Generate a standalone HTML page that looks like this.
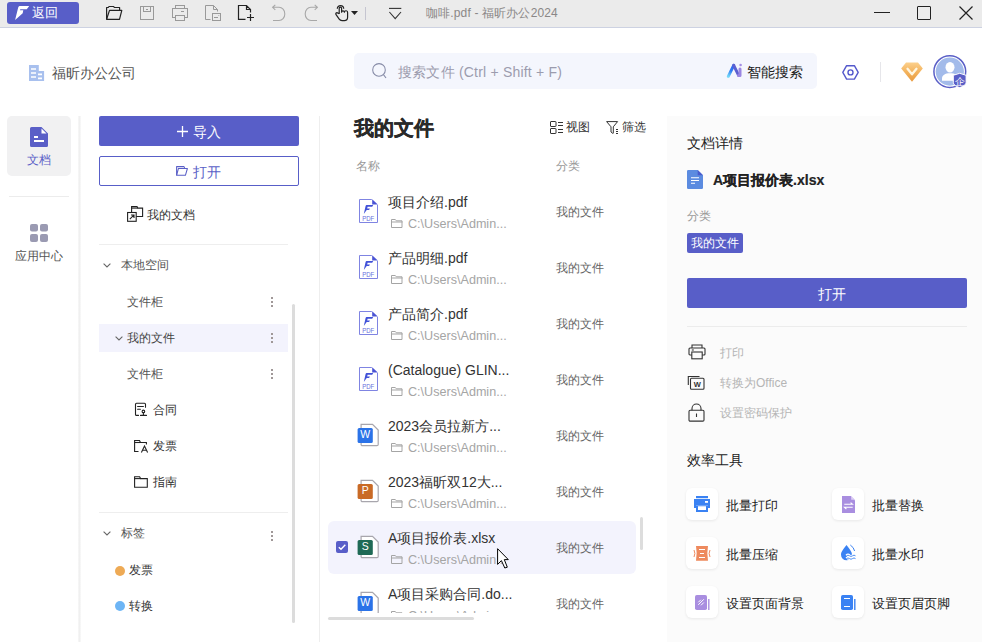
<!DOCTYPE html>
<html><head><meta charset="utf-8">
<style>
*{margin:0;padding:0;box-sizing:border-box}
html,body{width:982px;height:642px;overflow:hidden;background:#fff;font-family:"Liberation Sans",sans-serif;color:#333}
.a{position:absolute}
.t{position:absolute;white-space:nowrap;line-height:1}
svg{position:absolute;overflow:visible}
.dots{width:2px;height:11px;background:radial-gradient(circle,#a09898 0.9px,transparent 1.1px) 0 0/2px 4px repeat-y}
#titlebar{left:0;top:0;width:982px;height:28px;background:#ebebeb;border-bottom:1px solid #cdd2e2}
</style></head><body>
<!-- title bar -->
<div id="titlebar" class="a"></div>
<div class="a" style="left:7px;top:2px;width:72px;height:22px;background:#585ec8;border-radius:3px"></div>
<svg style="left:12px;top:3px" width="20" height="20" viewBox="0 0 20 20"><path d="M7.5 3.1L17.2 3L14.8 6.3L8.3 6.3L8 7.3L11.3 7.3L10.7 10.3L3.1 16.9L6.2 4.6Q6.6 3.1 7.5 3.1Z" fill="#fff"/></svg>
<div class="t" style="left:32px;top:6px;font-size:13px;color:#fff">返回</div>

<!-- toolbar icons -->
<svg style="left:102px;top:2px" width="24" height="22" viewBox="0 0 24 22" fill="none" stroke="#222" stroke-width="1.2" stroke-linejoin="round"><path d="M4.6 17.3V5.5H6.3L7 4.5H11.7L12.3 5.5H17.6V8.3"/><path d="M7.5 8.4H19.8L17.5 17.3H4.6Z"/></svg>
<svg style="left:140px;top:6px" width="14" height="14" viewBox="0 0 14 14" fill="none" stroke="#999" stroke-width="1"><rect x="0.5" y="0.5" width="13" height="13"/><rect x="3.5" y="0.5" width="7" height="5"/><path d="M6 3.5H8"/></svg>
<svg style="left:168px;top:2px" width="58" height="22" viewBox="0 0 58 22" fill="none" stroke="#999" stroke-width="1"><rect x="7.5" y="3.5" width="9" height="3"/><rect x="4.5" y="6.5" width="15" height="9"/><rect x="7.5" y="13.5" width="9" height="5" fill="#ebebeb"/><path d="M13 9.5H16"/><path d="M42.5 17.5H37.5V3.5H45.5L49.5 7.5V9.5M45.5 3.5V7.5H49.5"/><rect x="44.5" y="11.5" width="8" height="7"/><path d="M46 15.5H50M50.5 13.5H51.2"/></svg>

<svg style="left:234px;top:2px" width="56" height="22" viewBox="0 0 56 22" fill="none" stroke="#222" stroke-width="1.2"><path d="M11.5 17.3H4.5V3.5H12.5L16.5 7.5V10.5M12.5 3.5V7.5H16.5M16.5 12V19M13 15.5H20"/><path d="M39 18.5H45A5.8 6.6 0 0 0 45 5.3H38.6M41.3 2.8L38.6 5.3L41.3 7.8" stroke="#a8a8a8" stroke-width="1.1"/></svg>

<svg style="left:299px;top:2px" width="24" height="22" viewBox="0 0 24 22" fill="none" stroke="#a8a8a8" stroke-width="1.1"><g transform="translate(24 0) scale(-1 1)"><path d="M6 18.5H12A5.8 6.6 0 0 0 12 5.3H5.6M8.3 2.8L5.6 5.3L8.3 7.8"/></g></svg>
<svg style="left:330px;top:2px" width="32" height="22" viewBox="0 0 32 22" fill="none" stroke="#222" stroke-width="1.2" stroke-linejoin="round"><path d="M7.3 6.8A3.2 3.2 0 0 1 13.7 6.8"/><path d="M9.2 12V6.4A1.2 1.2 0 0 1 11.6 6.4V10.2A1.4 1.4 0 0 1 14.4 10.2A1.6 1.6 0 0 1 17.6 10.5V15.3Q17.6 18.6 14.3 18.6H12Q10.2 18.6 9.2 17.2L5.9 12.4Q5.4 10.6 7.2 10.7L9.2 11.8"/><path d="M21 9.1H28L24.5 13Z" fill="#222" stroke="none"/></svg>

<div class="a" style="left:365px;top:7px;width:1px;height:13px;background:#c5c5d0"></div>
<svg style="left:388px;top:7px" width="15" height="13" viewBox="0 0 15 13" fill="none" stroke="#333" stroke-width="1.1"><path d="M1 1.4h12.3"/><path d="M1.4 5l5.8 6.6 5.8-6.6"/></svg>
<div class="t" style="left:426px;top:7px;font-size:12px;color:#8a8787;letter-spacing:0.15px">咖啡.pdf - 福昕办公2024</div>
<!-- window controls -->
<div class="a" style="left:874px;top:12px;width:16px;height:1px;background:#222"></div>
<div class="a" style="left:917px;top:6px;width:14px;height:14px;border:1.3px solid #222;border-radius:1px"></div>
<svg style="left:959px;top:6px" width="14" height="14" viewBox="0 0 14 14" stroke="#222" stroke-width="1.2"><path d="M0.5 0.5L13.5 13.5M13.5 0.5L0.5 13.5"/></svg>


<!-- header -->
<svg style="left:29px;top:65px" width="16" height="16" viewBox="0 0 16 16"><path d="M0 0h9.8v16H0z M9.8 6h5.3v10H9.8z" fill="#a8c0ee"/><path d="M2 4h5M2 8h5M2 12h5M9 9.3h4M9 13.3h4" stroke="#fff" stroke-width="1.7"/></svg>
<div class="t" style="left:52px;top:66px;font-size:14px;color:#555">福昕办公公司</div>
<div class="a" style="left:354px;top:53px;width:463px;height:36px;background:#f4f6fd;border-radius:5px"></div>
<svg style="left:372px;top:63px" width="15" height="16" viewBox="0 0 15 16" fill="none" stroke="#858aa6" stroke-width="1.05"><circle cx="7" cy="6.9" r="6.3"/><path d="M11.5 11.6L14 15"/></svg>
<div class="t" style="left:398px;top:65px;font-size:14px;color:#9c9cae;letter-spacing:0.2px">搜索文件 (Ctrl + Shift + F)</div>
<svg style="left:722px;top:58px" width="26" height="26" viewBox="0 0 26 26"><defs><linearGradient id="ai" x1="0" y1="1" x2="0.3" y2="0"><stop offset="0" stop-color="#72d6f8"/><stop offset="0.6" stop-color="#2f7cf2"/><stop offset="1" stop-color="#2f6cf0"/></linearGradient></defs><path d="M6.3 18.3L11.7 7.3" stroke="url(#ai)" stroke-width="3" stroke-linecap="round"/><path d="M11.7 7.3L16.5 17.2" stroke="#5c5fd0" stroke-width="3" stroke-linecap="round"/><path d="M16.5 17.5h1.5V11" stroke="#9a86e2" stroke-width="3" stroke-linecap="round" stroke-linejoin="round" fill="none"/><circle cx="18.6" cy="7" r="1.3" fill="#a58ee4"/></svg>
<div class="t" style="left:747px;top:65px;font-size:14px;color:#222">智能搜索</div>
<svg style="left:842px;top:65px" width="17" height="15" viewBox="0 0 17 15" fill="none" stroke="#5458cc" stroke-width="1.4" stroke-linejoin="round"><path d="M4.6 0.7H12.4L16.2 7.4L12.4 14.1H4.6L0.8 7.4Z"/><circle cx="8.5" cy="7.4" r="2.5"/></svg>
<div class="a" style="left:880px;top:62px;width:1px;height:20px;background:#e6e6ea"></div>
<svg style="left:901px;top:62px" width="22" height="20" viewBox="0 0 22 20"><defs><linearGradient id="dg" x1="0" y1="0" x2="0" y2="1"><stop offset="0" stop-color="#fcd08c"/><stop offset="0.45" stop-color="#f4b560"/><stop offset="1" stop-color="#e99a3e"/></linearGradient></defs><path d="M5 0.5h12l4.8 6L11 19.8 0.2 6.5Z" fill="url(#dg)"/><path d="M6.5 6.8L11 12.3 15.5 6.8" fill="none" stroke="#fff6e0" stroke-width="2.3" stroke-linecap="round" stroke-linejoin="round"/></svg>
<svg style="left:928px;top:50px" width="44" height="44" viewBox="0 0 44 44"><circle cx="21.8" cy="21.6" r="15.9" fill="#fff" stroke="#5a5fc7" stroke-width="1.5"/><circle cx="21.8" cy="21.6" r="14.1" fill="#a3bbea"/><ellipse cx="22" cy="17.3" rx="4.5" ry="5.3" fill="#fff"/><path d="M14 30.8V28.5C14 25.3 17 23.3 22 23.3C27 23.3 30 25.3 30 28.5V30.8Z" fill="#fff"/><path d="M25.3 25.3L31.7 23.3L38.1 25.3V32.3C38.1 34.8 35.2 36.5 31.7 37.6C28.2 36.5 25.3 34.8 25.3 32.3Z" fill="#5a5fc7" stroke="#fff" stroke-width="1"/><text x="31.7" y="35.2" font-size="9.5" fill="#fff" text-anchor="middle" font-family="Liberation Sans">企</text></svg>


<!-- left nav -->
<div class="a" style="left:7px;top:116px;width:64px;height:60px;background:#f1f1f2;border-radius:5px"></div>
<svg style="left:30px;top:127px" width="18" height="20" viewBox="0 0 18 20"><path d="M1.5 0H11.5L18 6.5V18.5A1.5 1.5 0 0 1 16.5 20H1.5A1.5 1.5 0 0 1 0 18.5V1.5A1.5 1.5 0 0 1 1.5 0Z" fill="#5a5fc7"/><path d="M11.5 1.5V6.5H16.5Z" fill="#fff"/><rect x="4" y="9" width="4" height="2" fill="#fff"/><rect x="4" y="13" width="10" height="2" fill="#fff"/></svg>
<div class="t" style="left:27px;top:154px;font-size:12px;color:#5a5fc7">文档</div>
<div class="a" style="left:9px;top:196px;width:60px;height:1px;background:#ececec"></div>
<svg style="left:30px;top:224px" width="18" height="18" viewBox="0 0 18 18" fill="#9a9ab2"><rect x="0" y="0" width="8" height="7.5" rx="2"/><rect x="10" y="0" width="8" height="7.5" rx="2"/><rect x="0" y="10" width="8" height="8" rx="2"/><rect x="10" y="10" width="8" height="8" rx="2"/></svg>
<div class="t" style="left:15px;top:250px;font-size:12px;color:#555">应用中心</div>
<div class="a" style="left:78px;top:116px;width:3px;height:526px;background:linear-gradient(to right,#f8f8f8,#f0f0f0 50%,#fafafa)"></div>

<!-- tree panel -->
<div class="a" style="left:99px;top:116px;width:200px;height:29.5px;background:#585ec8;border-radius:2px"></div>
<svg style="left:177px;top:126px" width="11" height="11" viewBox="0 0 11 11" stroke="#fff" stroke-width="1.3"><path d="M5.5 0v11M0 5.5h11"/></svg>
<div class="t" style="left:193px;top:125px;font-size:14px;color:#fff">导入</div>
<div class="a" style="left:99px;top:156px;width:200px;height:30px;border:1px solid #585ec8;border-radius:2px;background:#fff"></div>
<svg style="left:176px;top:166px" width="12" height="10" viewBox="0 0 12 10" fill="none" stroke="#5a5fc7" stroke-width="1.05" stroke-linejoin="round"><path d="M0.6 9.3V0.6H8L8.8 2.4"/><path d="M2.4 2.5H11.4L9.4 9.3H0.6Z"/></svg>
<div class="t" style="left:193px;top:165px;font-size:14px;color:#5a5fc7">打开</div>
<svg style="left:127px;top:206px" width="17" height="16" viewBox="0 0 17 16" fill="none" stroke="#222" stroke-width="1.1"><path d="M4.6 6.3V0.6H10L10.8 2.1H15.6V10.5H9.2"/><path d="M4.6 2.1H10.8"/><rect x="0.6" y="6.5" width="8.6" height="8.8"/><path d="M2.8 13.2L6.8 9.2M4 9H7V12"/></svg>
<div class="t" style="left:147px;top:209px;font-size:12px;color:#333">我的文档</div>
<div class="a" style="left:99px;top:244px;width:189px;height:1px;background:#eeeeee"></div>

<svg style="left:103px;top:263px" width="8" height="5" viewBox="0 0 8 5" fill="none" stroke="#666" stroke-width="1.1"><path d="M0.6 0.6L4 4L7.4 0.6"/></svg>
<div class="t" style="left:121px;top:259px;font-size:12px;color:#555">本地空间</div>
<div class="t" style="left:127px;top:296px;font-size:12px;color:#555">文件柜</div>
<div class="a dots" style="left:271px;top:296px"></div>
<div class="a" style="left:99px;top:324px;width:189px;height:28px;background:#f3f3fd"></div>
<svg style="left:115px;top:336px" width="8" height="5" viewBox="0 0 8 5" fill="none" stroke="#666" stroke-width="1.1"><path d="M0.6 0.6L4 4L7.4 0.6"/></svg>
<div class="t" style="left:127px;top:332px;font-size:12px;color:#444">我的文件</div>
<div class="a dots" style="left:271px;top:332px"></div>
<div class="t" style="left:127px;top:368px;font-size:12px;color:#555">文件柜</div>
<div class="a dots" style="left:271px;top:368px"></div>
<svg style="left:131px;top:400px" width="20" height="20" viewBox="0 0 20 20" fill="none" stroke="#222" stroke-width="1.1" stroke-linecap="round"><path d="M7.5 15.4H5.5Q4.5 15.4 4.5 14.4V4.3Q4.5 3.3 5.5 3.3H13.5Q14.5 3.3 14.5 4.3V7.3"/><path d="M9.5 15.4H15.5M12.4 12.6V15.4M6.6 6.5H12.4M6.6 9.3H9.4"/><circle cx="12.4" cy="11.4" r="1.3"/></svg>
<div class="t" style="left:153px;top:404px;font-size:12px;color:#333">合同</div>
<svg style="left:131px;top:436px" width="20" height="20" viewBox="0 0 20 20" fill="none" stroke="#222" stroke-width="1.1"><path d="M7.5 15.5H3.6V4.5H8.5L9.5 6.5H15.4V8.5"/><path d="M3.6 6.5H9.5"/><path d="M10.4 16.6L13.5 10L16.6 16.6M11.5 14.3H15.5"/></svg>
<div class="t" style="left:153px;top:440px;font-size:12px;color:#333">发票</div>
<svg style="left:131px;top:472px" width="20" height="20" viewBox="0 0 20 20" fill="none" stroke="#222" stroke-width="1.1"><path d="M3.6 15.2V4.7H8.6L9.6 6.6H16.3V15.2Z"/><path d="M3.6 6.6H9.6"/></svg>
<div class="t" style="left:153px;top:476px;font-size:12px;color:#333">指南</div>
<div class="a" style="left:99px;top:512px;width:189px;height:1px;background:#eeeeee"></div>
<svg style="left:103px;top:531px" width="8" height="5" viewBox="0 0 8 5" fill="none" stroke="#666" stroke-width="1.1"><path d="M0.6 0.6L4 4L7.4 0.6"/></svg>
<div class="t" style="left:121px;top:527px;font-size:12px;color:#555">标签</div>
<div class="a dots" style="left:271px;top:530px"></div>
<div class="a" style="left:115px;top:566px;width:10px;height:10px;border-radius:50%;background:#eeaa55"></div>
<div class="t" style="left:129px;top:564px;font-size:12px;color:#333">发票</div>
<div class="a" style="left:115px;top:601px;width:10px;height:10px;border-radius:50%;background:#6db5f5"></div>
<div class="t" style="left:129px;top:600px;font-size:12px;color:#333">转换</div>
<div class="a" style="left:292px;top:304px;width:3px;height:319px;background:#dcdcdc;border-radius:1.5px"></div>
<div class="a" style="left:319px;top:116px;width:1px;height:526px;background:#eeeeee"></div>

<!-- file list -->
<div class="t" style="left:354px;top:118px;font-size:20px;font-weight:bold;color:#2a2a2a;-webkit-text-stroke:0.35px #2a2a2a">我的文件</div>
<svg style="left:550px;top:121px" width="14" height="13" viewBox="0 0 14 13" fill="none" stroke="#333" stroke-width="1"><rect x="0.5" y="0.5" width="5.5" height="5" rx="0.5"/><rect x="0.5" y="7.5" width="5.5" height="5" rx="0.5"/><path d="M8 1.5H13M8 4.5H13M8 8.5H13M8 11.5H13"/></svg>
<div class="t" style="left:566px;top:121px;font-size:12px;color:#333">视图</div>
<svg style="left:606px;top:121px" width="14" height="13" viewBox="0 0 14 13" fill="none" stroke="#333" stroke-width="1"><path d="M0.6 0.6H11.6L7.3 5.8V12Q7.3 12.6 6.7 12.3L5 11V5.8Z" stroke-linejoin="round"/><path d="M10 8.5H12M10 10.5H12M10 12.5H12"/></svg>
<div class="t" style="left:622px;top:121px;font-size:12px;color:#333">筛选</div>
<div class="t" style="left:356px;top:160px;font-size:12px;color:#999">名称</div>
<div class="t" style="left:556px;top:160px;font-size:12px;color:#999">分类</div>
<div class="a" style="left:328px;top:521px;width:308px;height:53px;background:#f3f3fd;border-radius:6px"></div>
<div class="a" style="left:336px;top:541px;width:12px;height:12px;background:#585ec8;border-radius:2px"></div>
<svg style="left:336px;top:541px" width="12" height="12" viewBox="0 0 12 12" fill="none" stroke="#fff" stroke-width="1.4"><path d="M2.8 6.2L5 8.3L9.3 3.8"/></svg>
<div class="a" style="left:320px;top:186px;width:347px;height:427px;overflow:hidden">
<svg style="left:39px;top:13px" width="19" height="24" viewBox="0 0 19 24"><path d="M12.8 0.5H0.5V23.5H18.5V5.8" fill="none" stroke="#7f84e2" stroke-width="1"/><path d="M13.2 0.2L18.8 5.4H13.2Z" fill="#4b54d4"/><path d="M7.6 6H14.2L13.2 7.8H8.6L8.2 9.5H10.9L10.1 11H7.7L4.8 14.9L6.6 7Q6.9 6 7.6 6Z" fill="#4151d8"/><text x="9.2" y="22" font-size="8" font-family="Liberation Sans" fill="#6870dc" text-anchor="middle" textLength="12" lengthAdjust="spacingAndGlyphs">PDF</text></svg>
<div class="t" style="left:68px;top:9px;font-size:14px;color:#333">项目介绍.pdf</div>
<svg style="left:71px;top:33px" width="12" height="10" viewBox="0 0 12 10" fill="none" stroke="#a5a5a5" stroke-width="1"><path d="M0.5 8.5V0.5h3.8l1 1.3h5.7V8.5Z"/><path d="M0.5 3h11"/></svg>
<div class="t" style="left:88px;top:32px;font-size:12.6px;color:#a5a5a5">C:\Users\Admin...</div>
<div class="t" style="left:236px;top:20px;font-size:12px;color:#666">我的文件</div>
<svg style="left:39px;top:69px" width="19" height="24" viewBox="0 0 19 24"><path d="M12.8 0.5H0.5V23.5H18.5V5.8" fill="none" stroke="#7f84e2" stroke-width="1"/><path d="M13.2 0.2L18.8 5.4H13.2Z" fill="#4b54d4"/><path d="M7.6 6H14.2L13.2 7.8H8.6L8.2 9.5H10.9L10.1 11H7.7L4.8 14.9L6.6 7Q6.9 6 7.6 6Z" fill="#4151d8"/><text x="9.2" y="22" font-size="8" font-family="Liberation Sans" fill="#6870dc" text-anchor="middle" textLength="12" lengthAdjust="spacingAndGlyphs">PDF</text></svg>
<div class="t" style="left:68px;top:65px;font-size:14px;color:#333">产品明细.pdf</div>
<svg style="left:71px;top:89px" width="12" height="10" viewBox="0 0 12 10" fill="none" stroke="#a5a5a5" stroke-width="1"><path d="M0.5 8.5V0.5h3.8l1 1.3h5.7V8.5Z"/><path d="M0.5 3h11"/></svg>
<div class="t" style="left:88px;top:88px;font-size:12.6px;color:#a5a5a5">C:\Users\Admin...</div>
<div class="t" style="left:236px;top:76px;font-size:12px;color:#666">我的文件</div>
<svg style="left:39px;top:125px" width="19" height="24" viewBox="0 0 19 24"><path d="M12.8 0.5H0.5V23.5H18.5V5.8" fill="none" stroke="#7f84e2" stroke-width="1"/><path d="M13.2 0.2L18.8 5.4H13.2Z" fill="#4b54d4"/><path d="M7.6 6H14.2L13.2 7.8H8.6L8.2 9.5H10.9L10.1 11H7.7L4.8 14.9L6.6 7Q6.9 6 7.6 6Z" fill="#4151d8"/><text x="9.2" y="22" font-size="8" font-family="Liberation Sans" fill="#6870dc" text-anchor="middle" textLength="12" lengthAdjust="spacingAndGlyphs">PDF</text></svg>
<div class="t" style="left:68px;top:121px;font-size:14px;color:#333">产品简介.pdf</div>
<svg style="left:71px;top:145px" width="12" height="10" viewBox="0 0 12 10" fill="none" stroke="#a5a5a5" stroke-width="1"><path d="M0.5 8.5V0.5h3.8l1 1.3h5.7V8.5Z"/><path d="M0.5 3h11"/></svg>
<div class="t" style="left:88px;top:144px;font-size:12.6px;color:#a5a5a5">C:\Users\Admin...</div>
<div class="t" style="left:236px;top:132px;font-size:12px;color:#666">我的文件</div>
<svg style="left:39px;top:181px" width="19" height="24" viewBox="0 0 19 24"><path d="M12.8 0.5H0.5V23.5H18.5V5.8" fill="none" stroke="#7f84e2" stroke-width="1"/><path d="M13.2 0.2L18.8 5.4H13.2Z" fill="#4b54d4"/><path d="M7.6 6H14.2L13.2 7.8H8.6L8.2 9.5H10.9L10.1 11H7.7L4.8 14.9L6.6 7Q6.9 6 7.6 6Z" fill="#4151d8"/><text x="9.2" y="22" font-size="8" font-family="Liberation Sans" fill="#6870dc" text-anchor="middle" textLength="12" lengthAdjust="spacingAndGlyphs">PDF</text></svg>
<div class="t" style="left:68px;top:177px;font-size:14px;color:#333">(Catalogue) GLIN...</div>
<svg style="left:71px;top:201px" width="12" height="10" viewBox="0 0 12 10" fill="none" stroke="#a5a5a5" stroke-width="1"><path d="M0.5 8.5V0.5h3.8l1 1.3h5.7V8.5Z"/><path d="M0.5 3h11"/></svg>
<div class="t" style="left:88px;top:200px;font-size:12.6px;color:#a5a5a5">C:\Users\Admin...</div>
<div class="t" style="left:236px;top:188px;font-size:12px;color:#666">我的文件</div>
<svg style="left:37px;top:237px" width="23" height="24" viewBox="0 0 23 24"><path d="M4.1 1.3H15.5L21.2 7V21.5a1.2 1.2 0 0 1-1.2 1.2H5.3a1.2 1.2 0 0 1-1.2-1.2Z" fill="#fff" stroke="#a8a6ad" stroke-width="1.2"/><rect x="0.6" y="5" width="15.2" height="15" rx="1.5" fill="#2b73e8"/><text x="8.2" y="15" font-size="10.5" font-family="Liberation Sans" fill="#fff" text-anchor="middle">W</text></svg>
<div class="t" style="left:68px;top:233px;font-size:14px;color:#333">2023会员拉新方...</div>
<svg style="left:71px;top:257px" width="12" height="10" viewBox="0 0 12 10" fill="none" stroke="#a5a5a5" stroke-width="1"><path d="M0.5 8.5V0.5h3.8l1 1.3h5.7V8.5Z"/><path d="M0.5 3h11"/></svg>
<div class="t" style="left:88px;top:256px;font-size:12.6px;color:#a5a5a5">C:\Users\Admin...</div>
<div class="t" style="left:236px;top:244px;font-size:12px;color:#666">我的文件</div>
<svg style="left:37px;top:293px" width="23" height="24" viewBox="0 0 23 24"><path d="M4.1 1.3H15.5L21.2 7V21.5a1.2 1.2 0 0 1-1.2 1.2H5.3a1.2 1.2 0 0 1-1.2-1.2Z" fill="#fff" stroke="#a8a6ad" stroke-width="1.2"/><rect x="0.6" y="5" width="15.2" height="15" rx="1.5" fill="#c96a26"/><text x="8.2" y="15" font-size="10.5" font-family="Liberation Sans" fill="#fff" text-anchor="middle">P</text></svg>
<div class="t" style="left:68px;top:289px;font-size:14px;color:#333">2023福昕双12大...</div>
<svg style="left:71px;top:313px" width="12" height="10" viewBox="0 0 12 10" fill="none" stroke="#a5a5a5" stroke-width="1"><path d="M0.5 8.5V0.5h3.8l1 1.3h5.7V8.5Z"/><path d="M0.5 3h11"/></svg>
<div class="t" style="left:88px;top:312px;font-size:12.6px;color:#a5a5a5">C:\Users\Admin...</div>
<div class="t" style="left:236px;top:300px;font-size:12px;color:#666">我的文件</div>
<svg style="left:37px;top:349px" width="23" height="24" viewBox="0 0 23 24"><path d="M4.1 1.3H15.5L21.2 7V21.5a1.2 1.2 0 0 1-1.2 1.2H5.3a1.2 1.2 0 0 1-1.2-1.2Z" fill="#fff" stroke="#a8a6ad" stroke-width="1.2"/><rect x="0.6" y="5" width="15.2" height="15" rx="1.5" fill="#1f6a56"/><text x="8.2" y="15" font-size="10.5" font-family="Liberation Sans" fill="#fff" text-anchor="middle">S</text></svg>
<div class="t" style="left:68px;top:345px;font-size:14px;color:#333">A项目报价表.xlsx</div>
<svg style="left:71px;top:369px" width="12" height="10" viewBox="0 0 12 10" fill="none" stroke="#a5a5a5" stroke-width="1"><path d="M0.5 8.5V0.5h3.8l1 1.3h5.7V8.5Z"/><path d="M0.5 3h11"/></svg>
<div class="t" style="left:88px;top:368px;font-size:12.6px;color:#a5a5a5">C:\Users\Admin...</div>
<div class="t" style="left:236px;top:356px;font-size:12px;color:#666">我的文件</div>
<svg style="left:37px;top:405px" width="23" height="24" viewBox="0 0 23 24"><path d="M4.1 1.3H15.5L21.2 7V21.5a1.2 1.2 0 0 1-1.2 1.2H5.3a1.2 1.2 0 0 1-1.2-1.2Z" fill="#fff" stroke="#a8a6ad" stroke-width="1.2"/><rect x="0.6" y="5" width="15.2" height="15" rx="1.5" fill="#2b73e8"/><text x="8.2" y="15" font-size="10.5" font-family="Liberation Sans" fill="#fff" text-anchor="middle">W</text></svg>
<div class="t" style="left:68px;top:401px;font-size:14px;color:#333">A项目采购合同.do...</div>
<svg style="left:71px;top:425px" width="12" height="10" viewBox="0 0 12 10" fill="none" stroke="#a5a5a5" stroke-width="1"><path d="M0.5 8.5V0.5h3.8l1 1.3h5.7V8.5Z"/><path d="M0.5 3h11"/></svg>
<div class="t" style="left:88px;top:424px;font-size:12.6px;color:#a5a5a5">C:\Users\Admin...</div>
<div class="t" style="left:236px;top:412px;font-size:12px;color:#666">我的文件</div>
</div>
<div class="a" style="left:640px;top:517px;width:3px;height:33px;background:#ddd;border-radius:1.5px"></div>
<div class="a" style="left:328px;top:617px;width:146px;height:3px;background:#dcdcdc;border-radius:1.5px"></div>
<svg style="left:497px;top:548px" width="13" height="22" viewBox="0 0 13 22"><path d="M0.6 0.7V16.4L4.4 12.6L7.8 20L10.3 19.2L7.3 11.6H11.3Z" fill="#fff" stroke="#000" stroke-width="1" stroke-linejoin="miter"/></svg>
<!-- right panel -->
<div class="a" style="left:667px;top:116px;width:315px;height:526px;background:#fbfbfb"></div>
<div class="t" style="left:687px;top:136px;font-size:14px;color:#222">文档详情</div>
<svg style="left:687px;top:170px" width="16" height="19" viewBox="0 0 16 19"><path d="M1.2 0H10.7L16 5.3V17.8A1.2 1.2 0 0 1 14.8 19H1.2A1.2 1.2 0 0 1 0 17.8V1.2A1.2 1.2 0 0 1 1.2 0Z" fill="#5b8be0"/><path d="M10.7 0V5.3H16Z" fill="#4a5ccc"/><path d="M4 7.7h8M4 10.5h8M4 13.3h4" stroke="#fff" stroke-width="1.1"/></svg>
<div class="t" style="left:713px;top:173px;font-size:14px;font-weight:bold;color:#222;-webkit-text-stroke:0.2px #222">A项目报价表.xlsx</div>
<div class="t" style="left:687px;top:210px;font-size:12px;color:#999">分类</div>
<div class="a" style="left:687px;top:233px;width:56px;height:20px;background:#585ec8;border-radius:2px"></div>
<div class="t" style="left:691px;top:237px;font-size:12px;color:#fff">我的文件</div>
<div class="a" style="left:687px;top:278px;width:280px;height:30px;background:#585ec8;border-radius:2px"></div>
<div class="t" style="left:818px;top:287px;font-size:14px;color:#fff">打开</div>
<div class="a" style="left:687px;top:326px;width:280px;height:1px;background:#ececec"></div>
<svg style="left:688px;top:344px" width="17" height="16" viewBox="0 0 17 16" fill="none" stroke="#333" stroke-width="1.1"><path d="M4 4V1h10v3"/><path d="M3.8 11H2a1 1 0 0 1-1-1V5a1 1 0 0 1 1-1h14a1 1 0 0 1 1 1v5a1 1 0 0 1-1 1h-1.8"/><rect x="3.8" y="8" width="10.4" height="6.8"/><path d="M3.8 6h2"/></svg>
<div class="t" style="left:720px;top:347px;font-size:12px;color:#b5b5b5">打印</div>
<svg style="left:687px;top:375px" width="18" height="15" viewBox="0 0 18 15" fill="none" stroke="#333" stroke-width="1.1"><path d="M1.3 10V1.5H12.5"/><rect x="3.5" y="3.2" width="13.5" height="11" rx="1"/><text x="10.3" y="12.2" font-size="7.5" font-weight="bold" font-family="Liberation Sans" fill="#333" stroke="none" text-anchor="middle">W</text></svg>
<div class="t" style="left:720px;top:377px;font-size:12px;color:#b5b5b5">转换为Office</div>
<svg style="left:688px;top:403px" width="17" height="19" viewBox="0 0 17 19" fill="none" stroke="#333" stroke-width="1.1"><path d="M4 7.3V5.5a4.5 4.5 0 0 1 9 0v1.8"/><rect x="1" y="7.3" width="15" height="10.8" rx="1.2"/><path d="M8.5 10.5v3.5"/></svg>
<div class="t" style="left:720px;top:407px;font-size:12px;color:#b5b5b5">设置密码保护</div>
<div class="t" style="left:687px;top:453px;font-size:14px;color:#222">效率工具</div>
<div class="a" style="left:686px;top:488px;width:32px;height:32px;background:#fff;border-radius:6px;box-shadow:0 1px 3px rgba(0,0,0,0.08)"></div><div class="a" style="left:832px;top:488px;width:32px;height:32px;background:#fff;border-radius:6px;box-shadow:0 1px 3px rgba(0,0,0,0.08)"></div><div class="a" style="left:686px;top:537px;width:32px;height:32px;background:#fff;border-radius:6px;box-shadow:0 1px 3px rgba(0,0,0,0.08)"></div><div class="a" style="left:832px;top:537px;width:32px;height:32px;background:#fff;border-radius:6px;box-shadow:0 1px 3px rgba(0,0,0,0.08)"></div><div class="a" style="left:686px;top:586px;width:32px;height:32px;background:#fff;border-radius:6px;box-shadow:0 1px 3px rgba(0,0,0,0.08)"></div><div class="a" style="left:832px;top:586px;width:32px;height:32px;background:#fff;border-radius:6px;box-shadow:0 1px 3px rgba(0,0,0,0.08)"></div>
<svg style="left:694px;top:496px" width="16" height="16" viewBox="0 0 16 16"><rect x="2" y="0" width="12" height="2.2" fill="#3a82f3"/><path d="M0 3h16v9h-2V9.5H2V12H0Z" fill="#3a82f3"/><path d="M2 9.5h12V16H2Z M4 10.2V14H12V10.2Z" fill="#3a82f3" fill-rule="evenodd"/><rect x="11" y="5" width="3" height="1.8" fill="#fff"/></svg>
<div class="t" style="left:726px;top:499px;font-size:13px;color:#222">批量打印</div>
<svg style="left:842px;top:496px" width="13" height="17" viewBox="0 0 13 17"><path d="M0 0H8.8L13 4.2V17H0Z" fill="#a98ee0"/><path d="M9.2 0V3.8H13Z" fill="#ddd0f5"/><path d="M2.3 8.3H10.5L8.6 6.6M10.7 11.3H2.5L4.4 13" fill="none" stroke="#fff" stroke-width="1.1"/></svg>
<div class="t" style="left:872px;top:499px;font-size:13px;color:#222">批量替换</div>
<svg style="left:692px;top:544px" width="20" height="20" viewBox="0 0 20 20"><path d="M4 2H16Q14.6 9.4 16 16.8H4Q5.4 9.4 4 2Z" fill="#ee8a5e"/><path d="M7 5.5h6M8 9.5h4M7 13.5h6" stroke="#fff" stroke-width="1.2"/><path d="M2 6Q3.8 9.4 2 13M18 6Q16.2 9.4 18 13" fill="none" stroke="#ee8a5e" stroke-width="1"/></svg>
<div class="t" style="left:726px;top:548px;font-size:13px;color:#222">批量压缩</div>
<svg style="left:838px;top:542px" width="22" height="22" viewBox="0 0 22 22"><path d="M8.5 3C6 6.5 3 9.5 3 12.8A5.5 5.5 0 0 0 14 12.8C14 9.5 11 6.5 8.5 3Z" fill="#3a82f3"/><path d="M12.3 3Q15.8 5.3 16.6 9" fill="none" stroke="#3a82f3" stroke-width="1"/><path d="M8.5 13.8q1.5-1.3 3 0t3 0t3 0M8.5 16.6q1.5-1.3 3 0t3 0t3 0" fill="none" stroke="#fff" stroke-width="3"/><path d="M8.5 13.8q1.5-1.3 3 0t3 0t3 0M8.5 16.6q1.5-1.3 3 0t3 0t3 0" fill="none" stroke="#3a82f3" stroke-width="0.9"/></svg>
<div class="t" style="left:872px;top:548px;font-size:13px;color:#222">批量水印</div>
<svg style="left:695px;top:595px" width="15" height="15" viewBox="0 0 15 15"><rect x="0" y="0" width="12" height="15" rx="1.8" fill="#a98ee0"/><path d="M3.3 9.8L8.8 4.3M6 10.3L8.8 7.5M3.3 7.3L5.8 4.8" stroke="#fff" stroke-width="1"/><path d="M13.8 4v11" stroke="#a98ee0" stroke-width="1.4"/></svg>
<div class="t" style="left:726px;top:597px;font-size:13px;color:#222">设置页面背景</div>
<svg style="left:841px;top:595px" width="15" height="15" viewBox="0 0 15 15"><rect x="0" y="0" width="12" height="15" rx="1.8" fill="#3a82f3"/><path d="M3 3.5h6M3 11.5h6" stroke="#fff" stroke-width="1.2"/><path d="M13.8 4v11" stroke="#3a82f3" stroke-width="1.4"/></svg>
<div class="t" style="left:872px;top:597px;font-size:13px;color:#222">设置页眉页脚</div>

</body></html>
